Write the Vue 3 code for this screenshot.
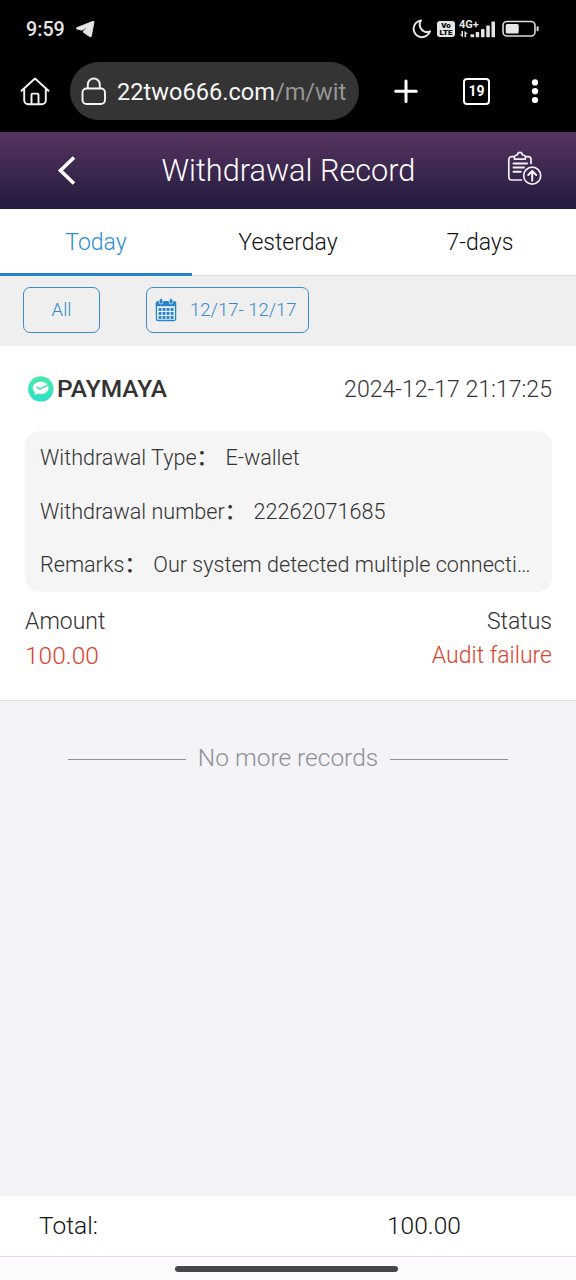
<script setup>
import { ref } from 'vue'

const tabs = ['Today', 'Yesterday', '7-days']
const activeTab = ref(0)

const details = [
  { label: 'Withdrawal Type', value: 'E-wallet' },
  { label: 'Withdrawal number', value: '22262071685' },
  { label: 'Remarks', value: 'Our system detected multiple connecti…' },
]

const calendarDots = [0, 1, 2].flatMap((r) => [0, 1, 2, 3].map((c) => ({ x: 3.6 + c * 4, y: 10 + r * 4 })))
</script>

<template>
  <div class="screen">
    <div class="status-bar">
      <span class="clock">9:59</span>
      <svg class="telegram" width="19" height="17" viewBox="0 0 19 17">
        <path d="M18 .6 15.400 15c-.2.9-1 1.100-1.700.6L7.600 11.400 7.300 10.200 12.500 5.400 5.800 9.200.8 7.900c-.7-.3-.7-.8 0-1.200L17 .3c.7-.2 1.100-.1 1 .3z" fill="#e6e6e6" stroke="#e6e6e6" stroke-width=".9" stroke-linejoin="round" />
      </svg>
      <div class="status-icons">
        <svg width="19" height="20" viewBox="0 0 19 20">
          <path d="M9 1.400A8.400 8.400 0 1 0 18 12.300 7 7 0 0 1 8.400 8.700 7.500 7.500 0 0 1 9 1.400z" fill="none" stroke="#e6e6e6" stroke-width="2" stroke-linejoin="round" />
        </svg>
        <div class="volte"><span>Vo</span><span>LTE</span></div>
        <div class="signal">
          <span class="network">4G+</span>
          <svg width="38" height="18" viewBox="0 0 38 18">
            <g fill="#e6e6e6">
              <path d="M4 11v6.400L.9 14.600H2.500V11zM5.500 17.200V10.800L8.900 13.900H7.100v3.300z" />
              <rect x="11.500" y="14.200" width="3.600" height="3" rx=".7" />
              <rect x="16.700" y="12" width="3.500" height="5.200" rx=".7" />
              <rect x="22" y="9" width="3.500" height="8.200" rx=".7" />
              <rect x="27.300" y="5.500" width="3.500" height="11.700" rx=".7" />
              <rect x="32.500" y="1.500" width="3.500" height="15.700" rx=".7" />
            </g>
          </svg>
        </div>
        <svg class="battery" width="38" height="18" viewBox="0 0 38 18">
          <rect x="1" y="1.500" width="32" height="14.500" rx="4" fill="none" stroke="#dcdcdc" stroke-width="1.600" />
          <rect x="3.700" y="4" width="13" height="9.600" rx="1.500" fill="#e6e6e6" />
          <rect x="34.600" y="6.200" width="2" height="5" rx="1" fill="#dcdcdc" />
        </svg>
      </div>
    </div>

    <div class="browser-bar">
      <svg class="home" width="32" height="30" viewBox="0 0 32 30" fill="none" stroke="#f5f5f5" stroke-width="1.900" stroke-linecap="round" stroke-linejoin="round">
        <path d="M1.500 14.800 15 2.500 28.500 14.800M4.200 13v11.300a4 4 0 0 0 4 4h13.600a4 4 0 0 0 4-4V13M11.500 28v-9.200a1.200 1.200 0 0 1 1.200-1.200h4.600a1.200 1.200 0 0 1 1.200 1.200V28" />
      </svg>
      <div class="address">
        <svg width="26" height="30" viewBox="0 0 26 30" fill="none" stroke="#f5f5f5" stroke-width="1.900">
          <rect x="1.500" y="12.500" width="22.500" height="15.500" rx="4" />
          <path d="M6.800 12.500V8.500a6 6 0 0 1 12 0v4" />
        </svg>
        <span class="url">22two666.com<span class="path">/m/wit</span></span>
      </div>
      <svg class="plus" width="24" height="24" viewBox="0 0 24 24" stroke="#fff" stroke-width="3" stroke-linecap="round">
        <path d="M12 1.900v20.600M1.700 12.200h20.600" />
      </svg>
      <div class="tab-count">19</div>
      <svg class="more" width="8" height="26" viewBox="0 0 8 26" fill="#fff">
        <circle cx="4" cy="4.400" r="3.100" />
        <circle cx="4" cy="13.200" r="3.100" />
        <circle cx="4" cy="22" r="3.100" />
      </svg>
    </div>

    <header class="page-header">
      <svg class="back" width="20" height="30" viewBox="0 0 20 30" fill="none" stroke="#fff" stroke-width="3.600">
        <path d="M17 1.500 3.500 14.500 17 27.500" />
      </svg>
      <h1>Withdrawal Record</h1>
      <svg class="clipboard" width="36" height="36" viewBox="0 0 36 36" fill="none" stroke="#f8eefa" stroke-width="1.700" stroke-linecap="round" stroke-linejoin="round">
        <path d="M6.800 5.700H4.500a2.700 2.700 0 0 0-2.700 2.700v17.900A2.700 2.700 0 0 0 4.500 29h10M18.800 5.700h2.500A2.700 2.700 0 0 1 24 8.400v4" />
        <path d="M7.500 8.100c-.7-2.800.5-3.900 2.700-4.100.4-1.800 1.300-2.700 2.700-2.700s2.300.9 2.700 2.700c2.200.2 3.400 1.300 2.700 4.100z" />
        <path d="M6.500 12.400H20M6.500 16.500h10.500M6.500 20.700h7.200" stroke-width="2" />
        <circle cx="25.200" cy="24.700" r="8.500" />
        <path d="M25.200 29.700v-9.500M21.200 24l4-4 4 4" stroke-width="2" />
      </svg>
    </header>

    <nav class="tabs">
      <button v-for="(tab, i) in tabs" :key="tab" :class="{ active: activeTab === i }" @click="activeTab = i">{{ tab }}</button>
    </nav>

    <div class="filters">
      <button class="chip all">All</button>
      <button class="chip range">
        <svg width="22" height="24" viewBox="0 0 22 24">
          <path d="M.8 7V5A2 2 0 0 1 2.800 3h16.400a2 2 0 0 1 2 2v2z" fill="#2784cb" />
          <path d="M1.400 6v15a1.500 1.500 0 0 0 1.500 1.500h16.200a1.500 1.500 0 0 0 1.500-1.500V6z" fill="#eef3f6" stroke="#2784cb" stroke-width="1.300" />
          <path d="M1.400 4h19.200v4.200H1.400z" fill="#2784cb" />
          <g fill="#2784cb" stroke="#efefef" stroke-width=".8">
            <rect x="4.200" y=".6" width="3.600" height="5.400" rx="1.700" />
            <rect x="14.200" y=".6" width="3.600" height="5.400" rx="1.700" />
          </g>
          <rect v-for="(d, i) in calendarDots" :key="i" :x="d.x" :y="d.y" width="2.900" height="2.900" fill="#2784cb" />
        </svg>
        <span>12/17- 12/17</span>
      </button>
    </div>

    <section class="record">
      <div class="record-head">
        <svg width="27" height="27" viewBox="0 0 27 27">
          <defs>
            <linearGradient id="mint" x1="0" y1="0" x2="0" y2="1">
              <stop offset="0" stop-color="#49e9a9" />
              <stop offset="1" stop-color="#2fdfca" />
            </linearGradient>
          </defs>
          <circle cx="13.800" cy="13.900" r="12.700" fill="url(#mint)" />
          <path d="M13.800 6.800c4.400 0 7.700 2.500 7.700 5.900s-3.300 6.300-7.700 6.300c-1.100 0-2.200-.2-3.100-.5l-3 1.500.2-3.100c-1.300-1.100-2.100-2.500-2.100-4.200 0-3.400 3.600-5.900 8-5.900z" fill="#fff" />
          <path d="m9.600 12 3.400 1.900 8-3.800" fill="none" stroke="#3edfb8" stroke-width="1.500" />
        </svg>
        <strong>PAYMAYA</strong>
        <time>2024-12-17 21:17:25</time>
      </div>

      <div class="details">
        <p v-for="row in details" :key="row.label"><span class="label">{{ row.label }}<b>：</b></span> {{ row.value }}</p>
      </div>

      <div class="summary">
        <span>Amount</span>
        <span>Status</span>
      </div>
      <div class="summary result">
        <span class="amount">100.00</span>
        <span>Audit failure</span>
      </div>
    </section>

    <main class="end-of-list">
      <div class="divider">No more records</div>
    </main>

    <footer class="total">
      <span>Total:</span>
      <span class="sum">100.00</span>
    </footer>
    <div class="gesture-bar"><i></i></div>
  </div>
</template>

<style>
body {
  background: #f3f3f8;
}
</style>

<style scoped>
* {
  box-sizing: border-box;
}
.screen {
  width: 576px;
  height: 1280px;
  display: flex;
  flex-direction: column;
  overflow: hidden;
  background: #f3f3f8;
  color: #333;
  font-family: Roboto, "Noto Sans CJK SC", sans-serif;
  font-weight: 300;
}
svg {
  display: block;
  flex: none;
}
button {
  font: inherit;
  background: none;
  border: 0;
  padding: 0;
}
.status-bar {
  height: 58px;
  flex: none;
  background: #000;
  color: #e6e6e6;
  display: flex;
  align-items: center;
  padding: 0 36px 0 26px;
}
.clock {
  font-size: 19.7px;
  font-weight: 500;
  line-height: 24px;
  padding-top: 2px;
}
.telegram {
  margin-left: 11px;
}
.status-icons {
  margin-left: auto;
  display: flex;
  align-items: center;
}
.volte {
  width: 18px;
  height: 16px;
  margin: 0 4px 0 6px;
  border-radius: 3px;
  background: #e6e6e6;
  color: #000;
  display: flex;
  flex-direction: column;
  align-items: center;
  font-size: 8px;
  line-height: 7px;
  font-weight: 900;
  padding-top: 1px;
}
.signal {
  position: relative;
  width: 38px;
}
.network {
  position: absolute;
  left: 0;
  top: -1px;
  font-size: 11px;
  line-height: 11px;
  font-weight: 700;
}
.battery {
  margin-left: 5px;
}
.browser-bar {
  height: 74px;
  flex: none;
  background: #000;
  display: flex;
  align-items: center;
  padding: 0 0 8px 20px;
}
.home {
  width: 32px;
}
.address {
  width: 289px;
  height: 58px;
  margin-left: 18px;
  border-radius: 29px;
  background: #343434;
  display: flex;
  align-items: center;
  padding-left: 11px;
}
.url {
  margin-left: 10px;
  padding-top: 2px;
  color: #f5f5f5;
  font-size: 23.6px;
  font-weight: 400;
  line-height: 30px;
}
.path {
  color: #969696;
}
.plus {
  margin-left: 35px;
}
.tab-count {
  width: 27px;
  height: 27px;
  margin-left: 45px;
  border: 2px solid #fff;
  border-radius: 4px;
  color: #fff;
  font-size: 14px;
  font-weight: 700;
  line-height: 23px;
  text-align: center;
}
.more {
  margin-left: 41px;
}
.page-header {
  height: 77px;
  flex: none;
  background: linear-gradient(#563560, #231a3d);
  display: flex;
  align-items: center;
  color: #fff;
}
.back {
  margin-left: 56.5px;
}
h1 {
  flex: 1;
  margin: 0;
  padding-right: 6.5px;
  text-align: center;
  font-size: 30.7px;
  font-weight: 300;
  line-height: 36px;
}
.clipboard {
  margin: -4px 33px 0 0;
}
.tabs {
  height: 67px;
  flex: none;
  display: grid;
  grid-template-columns: repeat(3, 1fr);
  background: #fff;
  border-bottom: 1px solid #dedede;
}
.tabs button {
  height: 67px;
  padding-top: 2px;
  color: #111;
  font-size: 23px;
  border-bottom: 3px solid transparent;
}
.tabs .active {
  color: #2a8fd0;
  border-color: #2784cb;
}
.filters {
  height: 70px;
  flex: none;
  background: #efefef;
  display: flex;
  align-items: center;
  padding: 0 23px 2px;
}
.chip {
  height: 46px;
  border: 1px solid #3b8cc8;
  border-radius: 7px;
  color: #3389c9;
  font-size: 18.5px;
}
.all {
  width: 77px;
}
.range {
  width: 163px;
  margin-left: 46px;
  display: flex;
  align-items: center;
  padding: 0 0 1px 8px;
  gap: 13px;
}
.record {
  height: 355px;
  flex: none;
  background: #fff;
  border-bottom: 1px solid #dedee2;
  padding: 0 24px 0 25px;
}
.record-head {
  height: 85px;
  display: flex;
  align-items: center;
  padding-left: 2px;
}
.record-head strong {
  margin-left: 3px;
  font-size: 24.5px;
  font-weight: 500;
}
.record-head time {
  margin-left: auto;
  padding-top: 2px;
  font-size: 23.1px;
}
.details {
  height: 161px;
  border-radius: 15px;
  background: #f5f5f5;
  padding: 0 15px;
}
.details p {
  margin: 0;
  height: 53.6px;
  line-height: 53.6px;
  font-size: 21.6px;
  white-space: nowrap;
}
.label {
  margin-right: 2px;
}
.label b {
  font-weight: 500;
}
.summary {
  display: flex;
  justify-content: space-between;
  align-items: center;
  padding-top: 13px;
  font-size: 23px;
  line-height: 34px;
}
.result {
  padding-top: 0;
  color: #d8432c;
}
.amount {
  font-size: 24.5px;
}
.end-of-list {
  flex: 1;
  padding: 40px 68px 0;
}
.divider {
  display: flex;
  align-items: center;
  gap: 12px;
  color: #909094;
  font-size: 24.5px;
  line-height: 34px;
}
.divider::before,
.divider::after {
  content: "";
  flex: 1;
  height: 1px;
  margin-top: 3px;
  background: #929296;
}
.total {
  height: 61px;
  flex: none;
  background: #fff;
  border-bottom: 1px solid #dedee0;
  display: grid;
  grid-template-columns: 348px 1fr;
  align-items: center;
  padding: 0 0 2px 39px;
  color: #111;
  font-size: 24.5px;
}
.gesture-bar {
  height: 23px;
  flex: none;
  background: #fdfbfe;
  display: flex;
  justify-content: center;
  padding: 9px 4px 0 0;
}
.gesture-bar i {
  width: 223px;
  height: 6px;
  border-radius: 3px;
  background: #48464b;
}
</style>
